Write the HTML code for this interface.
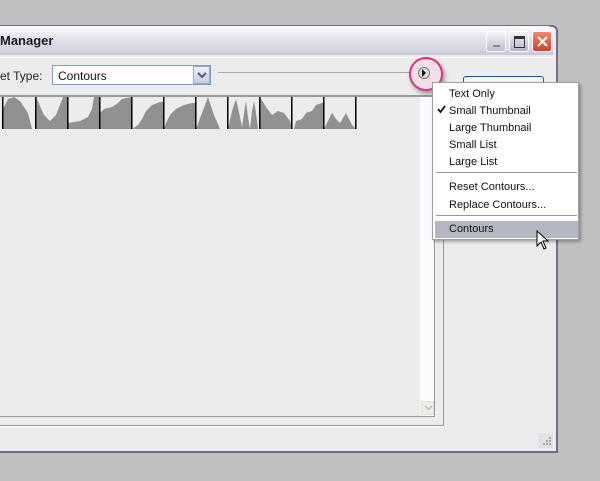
<!DOCTYPE html>
<html><head><style>
body{margin:0;width:600px;height:481px;background:#c0c0c0;position:relative;overflow:hidden;font-family:"Liberation Sans",Tahoma,sans-serif;}
.a{position:absolute;}
.win{left:-4px;top:25px;width:558px;height:424px;background:#ececec;border:2px solid #6e6e8c;border-radius:0 6px 0 0;}
.title{left:0;top:26px;width:553px;height:29px;background:linear-gradient(#fdfdff,#e4e4ee 40%,#d6d6e4 80%,#c8c8d8);border-radius:0 5px 0 0;}
.btn{top:31px;width:20px;height:21px;border-radius:3px;border:1px solid #fff;box-sizing:border-box;}
</style></head><body>
<div class="a win"></div>
<div class="a title"></div>
<div class="a" style="left:0;top:33px;font-size:13px;font-weight:bold;color:#1a1a1a;">Manager</div>
<div class="a btn" style="left:486px;background:linear-gradient(#f4f4f8,#bcbccc);"><div class="a" style="left:6px;top:13px;width:7px;height:2px;background:#888;"></div></div>
<div class="a btn" style="left:509px;background:linear-gradient(#f4f4f8,#b4b4c8);"><div class="a" style="left:4px;top:4px;width:9px;height:8px;border:1.5px solid #333;border-top-width:3px;"></div></div>
<div class="a btn" style="left:532px;background:linear-gradient(#f08870,#d04030);"><svg class="a" style="left:3px;top:3px" width="13" height="13"><path d="M2 2L11 11M11 2L2 11" stroke="#fff" stroke-width="2.2"/></svg></div>
<div class="a" style="left:0;top:57px;width:553px;height:1px;background:#fff"></div>
<div class="a" style="left:0;top:69px;font-size:12px;color:#222;">et Type:</div>
<div class="a" style="left:52px;top:65px;width:159px;height:20px;border:1px solid #7f9db9;background:#fff;box-sizing:border-box;"></div>
<div class="a" style="left:58px;top:69px;font-size:12px;color:#111;">Contours</div>
<div class="a" style="left:193px;top:66px;width:17px;height:18px;background:linear-gradient(#eef0fa,#c8cce0);border:1px solid #a0a8c8;box-sizing:border-box;"><svg class="a" style="left:3px;top:5px" width="10" height="7"><path d="M1 1L5 5L9 1" stroke="#4d5880" stroke-width="2" fill="none"/></svg></div>
<div class="a" style="left:218px;top:72px;width:223px;height:1px;background:#a8a8a8"></div>
<div class="a" style="left:0;top:94px;width:443px;height:331px;border-bottom:1px solid #999;border-right:1px solid #999;"></div>
<div class="a" style="left:0;top:426px;width:445px;height:1px;background:#fff"></div>
<div class="a" style="left:0;top:95px;width:435px;height:322px;border-top:2px solid #999;border-right:1px solid #999;border-bottom:1px solid #999;background:#ececec;box-sizing:border-box;"></div>
<div class="a" style="left:420px;top:97px;width:14px;height:319px;background:#fbfbff;"></div>
<div class="a" style="left:421px;top:401px;width:13px;height:14px;border:1px solid #e0e0d8;background:#eeeee8;box-sizing:border-box;"><svg class="a" style="left:2px;top:3px" width="9" height="6"><path d="M1 1L4.5 4.5L8 1" stroke="#c4c4bc" stroke-width="1.6" fill="none"/></svg></div>
<svg class="a" style="left:0;top:97px" width="360" height="32">
<g fill="#919191">
<path d="M3 32L3 12L8 2L14 0L20 4L28 16L32 32Z"/>
<path d="M36 0L44 18L50 24L56 18L63 0L68 0L68 32L36 32Z"/>
<path d="M68 32L68 26L80 24L88 20L92 12L94 0L100 0L100 32Z"/>
<path d="M100 32L100 16L104 12L112 10L118 6L122 2L132 0L132 32Z"/>
<path d="M132 32L138 28L142 22L146 14L152 8L160 5L164 5L164 32Z"/>
<path d="M164 32L166 26L170 18L176 12L184 8L192 6L196 6L196 32Z"/>
<path d="M196 32L202 16L208 0L214 18L220 32Z"/>
<path d="M228 32L232 14L236 2L240 20L242 30L244 16L246 4L248 20L250 32L252 14L254 4L256 16L258 32Z"/>
<path d="M260 32L260 0L266 10L272 18L278 14L284 16L290 24L292 32Z"/>
<path d="M294 32L296 24L302 22L306 16L312 14L316 8L322 6L324 4L324 32Z"/>
<path d="M324 32L332 16L336 22L340 26L346 16L352 28L356 32Z"/>
</g>
<g fill="#000"><rect x="2" y="0" width="1.5" height="32"/><rect x="35" y="0" width="1.5" height="32"/><rect x="67" y="0" width="1.5" height="32"/><rect x="99" y="0" width="1.5" height="32"/><rect x="131" y="0" width="1.5" height="32"/><rect x="163" y="0" width="1.5" height="32"/><rect x="195" y="0" width="1.5" height="32"/><rect x="227" y="0" width="1.5" height="32"/><rect x="259" y="0" width="1.5" height="32"/><rect x="291" y="0" width="1.5" height="32"/><rect x="323" y="0" width="1.5" height="32"/><rect x="355" y="0" width="1.5" height="32"/></g>
</svg>
<div class="a" style="left:463px;top:76px;width:79px;height:20px;border:1px solid #2a4a8a;border-radius:3px;background:#f4f4f0;"></div>
<div class="a" style="left:409px;top:57px;width:30px;height:30px;border-radius:50%;border:2px solid #e0307a;background:#f2dfe8;box-shadow:2px 3px 4px rgba(0,0,0,.35);"></div>
<div class="a" style="left:418px;top:67px;width:10px;height:10px;border-radius:50%;border:1px solid #777;background:#ddd;"></div>
<svg class="a" style="left:421px;top:69px" width="6" height="8"><path d="M1 0L5 4L1 8Z" fill="#111"/></svg>
<div class="a" style="left:432px;top:82px;width:147px;height:158px;background:#fff;border:1px solid #a0a0a0;box-sizing:border-box;box-shadow:2px 2px 3px rgba(0,0,0,.3);"></div>
<div class="a" style="left:435px;top:221px;width:143px;height:17px;background:#b4b6c2;"></div>
<div class="a" style="left:436px;top:172px;width:141px;height:1px;background:#999"></div>
<div class="a" style="left:436px;top:215px;width:141px;height:1px;background:#999"></div>
<div class="a" style="font-size:11px;color:#111;left:449px;top:86px;line-height:17px;">Text Only<br>Small Thumbnail<br>Large Thumbnail<br>Small List<br>Large List</div>
<div class="a" style="font-size:11px;color:#111;left:449px;top:178px;line-height:18px;">Reset Contours...<br>Replace Contours...</div>
<div class="a" style="font-size:11px;color:#111;left:449px;top:223px;">Contours</div>
<svg class="a" style="left:437px;top:105px" width="9" height="9"><path d="M1 4L3.5 7L8 1" stroke="#111" stroke-width="1.8" fill="none"/></svg>
<svg class="a" style="left:536px;top:230px" width="14" height="22"><path d="M1 1L1 16L5 12L8 19L10 18L7 11L12 11Z" fill="#fff" stroke="#000" stroke-width="1"/></svg>
<div class="a" style="left:538px;top:433px;width:15px;height:15px;background:#e0e0e6;"></div>
<svg class="a" style="left:540px;top:435px" width="13" height="13" fill="#a8a8a0"><rect x="9" y="2" width="2" height="2"/><rect x="6" y="5" width="2" height="2"/><rect x="9" y="5" width="2" height="2"/><rect x="3" y="8" width="2" height="2"/><rect x="6" y="8" width="2" height="2"/><rect x="9" y="8" width="2" height="2"/></svg>
</body></html>
